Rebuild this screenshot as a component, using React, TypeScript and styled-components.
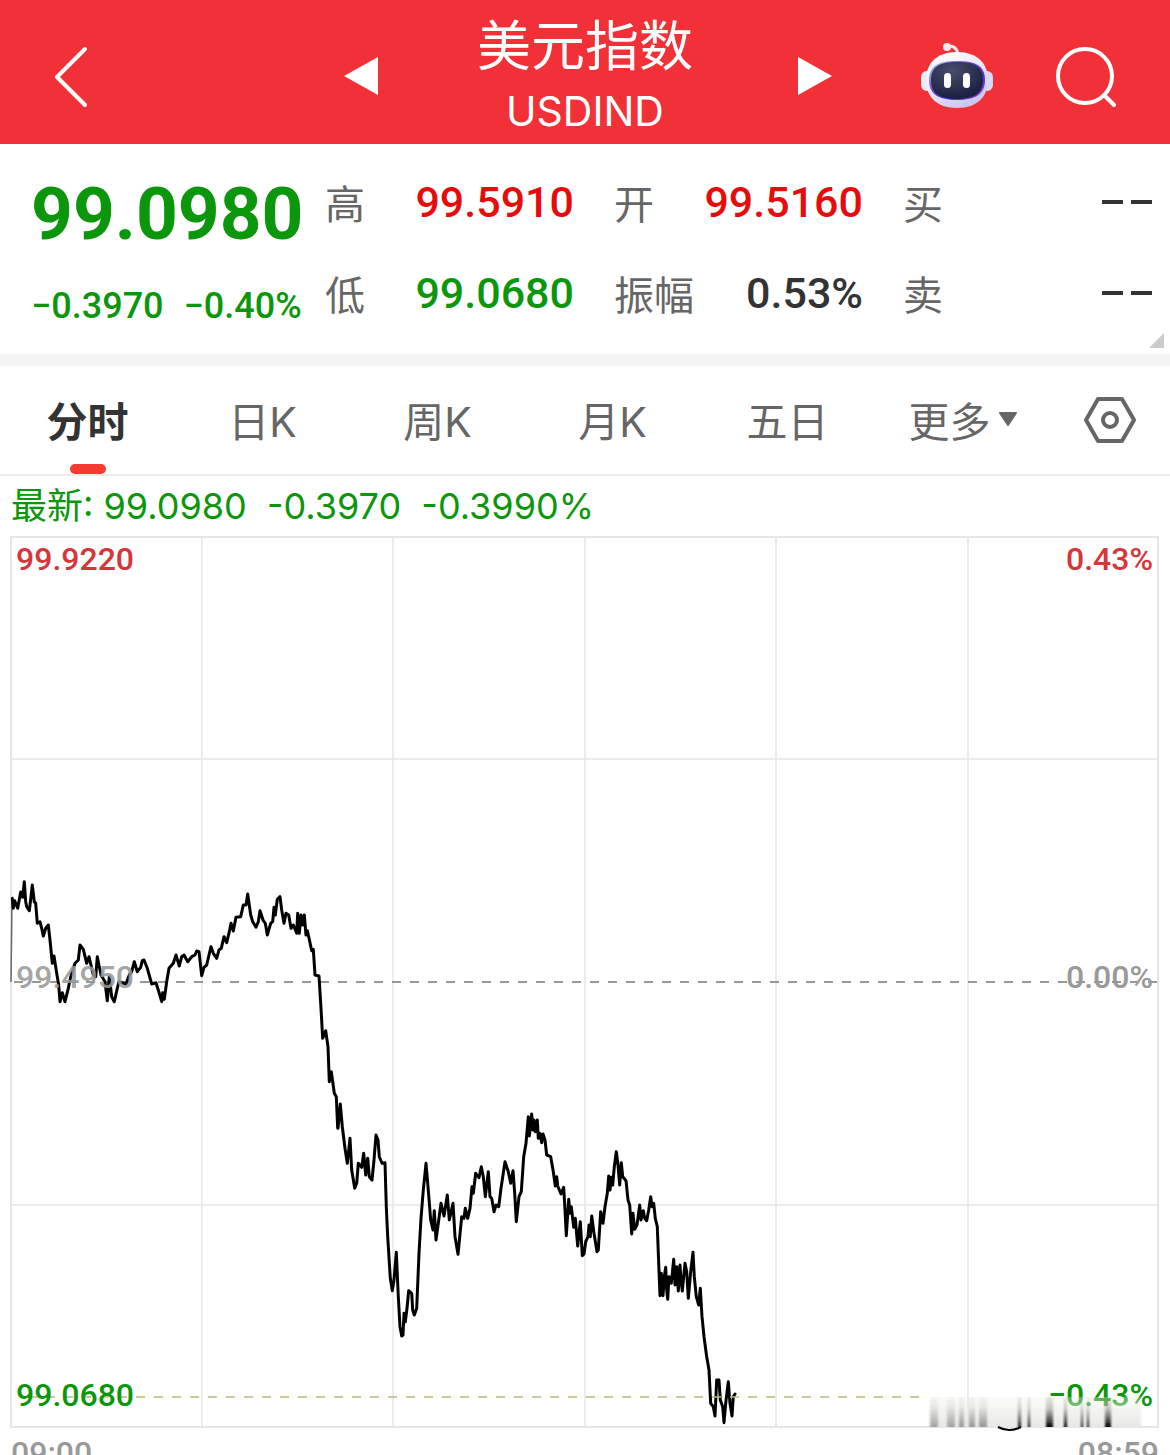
import React, { useState } from "react";
import styled, { createGlobalStyle } from "styled-components";

const RED = "#f23037";
const UP = "#e60c0c";
const DOWN = "#0b960b";
const INK = "#333333";
const GREY = "#666666";

const GlobalStyle = createGlobalStyle`
  *, *::before, *::after { box-sizing: border-box; }
  body {
    margin: 0;
    background: #ffffff;
    font-family: Inter, "Noto Sans CJK SC", sans-serif;
  }
  button {
    margin: 0;
    padding: 0;
    border: 0;
    background: none;
    color: inherit;
    font: inherit;
    cursor: pointer;
  }
`;

const Page = styled.main`
  display: flex;
  flex-direction: column;
  height: 100vh;
  overflow: hidden;
`;

const Header = styled.header`
  display: grid;
  grid-template-columns: 1fr 494px 1fr;
  align-items: center;
  height: 144px;
  flex: none;
  padding-top: 8px;
  background: ${RED};
  color: #ffffff;
`;

const HeaderSide = styled.div<{ $end?: boolean }>`
  display: flex;
  align-items: center;
  justify-content: ${(p) => (p.$end ? "flex-end" : "flex-start")};
  gap: 60px;
  padding: 0 52px;
`;

const IconButton = styled.button`
  display: flex;
  align-items: center;
  justify-content: center;
`;

const Switcher = styled.div`
  display: flex;
  align-items: center;
  justify-content: space-between;
`;

const TitleBlock = styled.div`
  display: flex;
  flex-direction: column;
  align-items: center;
`;

const Title = styled.h1`
  margin: 0;
  font-family: "Noto Sans CJK SC", sans-serif;
  font-size: 54px;
  font-weight: 400;
  line-height: 70px;
`;

const Symbol = styled.div`
  font-size: 41px;
  line-height: 66px;
`;

const Quote = styled.section`
  position: relative;
  display: grid;
  grid-template-columns: 294px 1fr;
  flex: none;
  padding: 12px 18px 14px 31px;
  border-bottom: 12px solid #f4f4f4;
`;

const PriceBlock = styled.div`
  display: flex;
  flex-direction: column;
  font-family: Roboto, sans-serif;
  color: ${DOWN};
`;

const Price = styled.div`
  font-size: 73px;
  font-weight: 700;
  line-height: 116px;
`;

const Changes = styled.div`
  display: flex;
  gap: 20px;
  font-size: 36px;
  font-weight: 500;
  line-height: 68px;
  white-space: nowrap;
`;

const Stats = styled.dl`
  display: grid;
  grid-template-columns: repeat(3, 1fr);
  grid-template-rows: repeat(2, 91px);
  column-gap: 40px;
  margin: 0;
`;

const Stat = styled.div`
  display: flex;
  align-items: center;
  justify-content: space-between;
`;

const StatLabel = styled.dt`
  color: ${GREY};
  font-family: "Noto Sans CJK SC", sans-serif;
  font-size: 40px;
  line-height: 60px;
`;

const StatValue = styled.dd<{ $color: string }>`
  margin: 0;
  color: ${(p) => p.$color};
  font-family: Roboto, sans-serif;
  font-size: 43px;
  font-weight: 500;
  line-height: 60px;
`;

const Dashes = styled.span`
  display: flex;
  gap: 8px;
  &::before, &::after {
    content: "";
    width: 21px;
    height: 4px;
    background: ${INK};
  }
`;

const Corner = styled.span`
  position: absolute;
  right: 6px;
  bottom: 6px;
  width: 15px;
  height: 15px;
  background: #cccccc;
  clip-path: polygon(100% 0, 100% 100%, 0 100%);
`;

const Tabs = styled.nav`
  display: flex;
  flex: none;
  height: 110px;
  border-bottom: 2px solid #ebebeb;
`;

const Tab = styled.button<{ $active: boolean }>`
  position: relative;
  display: flex;
  flex: 1 1 0;
  align-items: center;
  justify-content: center;
  gap: 8px;
  padding-bottom: 3px;
  color: ${(p) => (p.$active ? INK : GREY)};
  font-family: Inter, "Noto Sans CJK SC", sans-serif;
  font-size: 41px;
  font-weight: ${(p) => (p.$active ? 700 : 400)};
  &::after {
    content: "";
    display: ${(p) => (p.$active ? "block" : "none")};
    position: absolute;
    bottom: 0;
    width: 36px;
    height: 10px;
    border-radius: 5px;
    background: #f53a31;
  }
`;

const SettingsButton = styled(IconButton)`
  width: 120px;
`;

const Latest = styled.p`
  flex: none;
  margin: 0;
  padding: 0 11px;
  color: ${DOWN};
  font-size: 36px;
  line-height: 60px;
  white-space: pre;
`;

const Chart = styled.svg`
  display: block;
  flex: none;
  width: 100%;
  height: auto;
`;

const AxisText = styled.text`
  font-family: Roboto, sans-serif;
  font-size: 32px;
  font-weight: 500;
`;

const TimeAxis = styled.div`
  display: flex;
  flex: none;
  justify-content: space-between;
  padding: 0 11px;
  color: #999999;
  font-family: Roboto, sans-serif;
  font-size: 32px;
  font-weight: 500;
  line-height: 42px;
`;

/* Each trace holds samples in thirds of a unit from its own origin. */
const TRACES: { x: number; y: number; samples: number[][] }[] = [
  {
    x: 0,
    y: 324,
    samples: [
      [37, 115], [40, 145], [44, 122], [53, 145], [62, 96], [68, 112], [73, 65], [77, 125], [80, 140], [88, 152],
      [93, 110], [97, 75], [103, 125], [107, 130], [112, 190], [120, 185], [125, 205], [130, 228], [137, 205], [145, 195],
      [150, 240], [157, 310], [162, 288], [170, 340], [176, 375], [180, 425], [187, 398], [195, 425], [205, 385], [212, 350],
      [225, 310], [235, 300], [240, 255], [250, 268], [260, 310], [267, 290], [280, 345], [287, 350], [292, 290], [303, 345],
      [315, 365], [322, 422], [328, 350], [335, 410], [343, 425], [352, 385], [357, 365], [378, 372], [388, 345], [395, 335],
      [403, 305], [412, 335], [422, 322], [427, 302], [432, 300], [442, 325], [455, 372], [468, 368], [478, 400], [485, 425],
      [488, 398], [493, 418], [500, 365], [507, 325], [520, 310], [528, 285], [538, 318], [545, 290], [552, 285], [563, 305],
      [575, 290], [585, 285], [590, 273], [597, 275], [605, 347], [612, 322], [620, 315], [627, 285], [633, 260], [640, 280],
      [650, 295], [657, 270], [664, 265], [672, 230], [680, 248], [688, 215], [693, 190], [700, 213], [708, 172], [722, 170],
      [730, 135], [738, 135], [743, 102], [752, 165], [758, 185], [768, 202], [775, 185], [780, 152], [790, 182], [796, 190],
      [802, 225], [812, 190], [818, 185], [822, 142], [826, 165], [832, 118], [840, 110], [845, 150], [852, 190], [858, 160],
      [866, 165], [873, 205], [880, 195], [890, 220], [893, 160], [898, 220], [903, 165], [908, 195], [913, 165], [918, 225],
      [922, 212], [928, 238], [935, 272], [940, 268], [945, 345], [957, 348], [962, 430], [968, 535], [977, 512], [984, 560],
      [988, 665], [994, 635], [1003, 700], [1009, 710], [1013, 805],
    ],
  },
  {
    x: 310,
    y: 544,
    samples: [
      [84, 145], [91, 72], [97, 140], [105, 205], [112, 250], [120, 175], [125, 270], [134, 325], [140, 310], [145, 250],
      [155, 262], [161, 220], [167, 285], [173, 235], [178, 290], [186, 300], [192, 240], [198, 165], [204, 180], [208, 230],
      [216, 250], [225, 248], [229, 380], [233, 470], [241, 595], [247, 632], [252, 600], [259, 517], [265, 650], [270, 740],
      [275, 768], [279, 765], [282, 700], [286, 725], [291, 685], [296, 632], [305, 640], [308, 690], [313, 705], [320, 685],
      [327, 520], [333, 415], [340, 330], [348, 250], [354, 320], [362, 420], [369, 450], [373, 392], [378, 480], [385, 430],
      [393, 370], [402, 408], [412, 345], [418, 420], [429, 370], [435, 470], [444, 523], [455, 410], [462, 415], [466, 385],
      [473, 415], [480, 385], [486, 320], [490, 340], [497, 280], [507, 293], [514, 260], [520, 290], [526, 350], [535, 275],
      [540, 350], [545, 355], [552, 395], [558, 375], [566, 380], [573, 325], [579, 285], [585, 245], [595, 275], [602, 310],
      [609, 272], [614, 340], [619, 425], [627, 350], [634, 335], [641, 230], [648, 190], [655, 110], [658, 168], [665, 102],
      [668, 150], [672, 120], [676, 155], [682, 120],
    ],
  },
  {
    x: 500,
    y: 554,
    samples: [
      [115, 145], [120, 130], [125, 158], [129, 132], [135, 150], [140, 195], [152, 200], [160, 245], [166, 288], [170, 260],
      [173, 288], [183, 312], [191, 292], [195, 360], [199, 437], [206, 328], [210, 370], [214, 350], [221, 412], [226, 385],
      [233, 468], [241, 395], [247, 497], [252, 492], [257, 455], [264, 440], [267, 405], [271, 440], [275, 378], [282, 430],
      [291, 485], [295, 480], [302, 365], [309, 400], [315, 350], [322, 310], [326, 258], [330, 300], [334, 262], [338, 285],
      [343, 230], [349, 185], [354, 225], [359, 285], [364, 218], [368, 260], [378, 272], [384, 330], [389, 345], [395, 432],
      [399, 370], [404, 418], [411, 405], [419, 345], [423, 390], [430, 362], [434, 385], [440, 392], [446, 360], [452, 320],
      [456, 350], [461, 340], [466, 385], [472, 410], [476, 520], [480, 617], [484, 550], [489, 617], [493, 560], [497, 532],
      [500, 600], [503, 628], [507, 560], [514, 580], [521, 508], [525, 585], [530, 530], [535, 603], [540, 525], [543, 570],
      [547, 603], [555, 520], [560, 545], [565, 625], [572, 545], [579, 487], [583, 560], [589, 620], [596, 645], [601, 595],
      [606, 680], [612, 740], [620, 800], [627, 840], [632, 940], [640, 950], [645, 978], [650, 870], [657, 870], [661, 930],
      [668, 950], [672, 998], [677, 940], [685, 875], [690, 940], [696, 978], [700, 920], [705, 912],
    ],
  },
];

const priceLine = TRACES.flatMap((t) =>
  t.samples.map(([u, v]) => `${(t.x + u / 3).toFixed(1)},${(t.y + v / 3).toFixed(1)}`)
).join(" ");

const GRID_X = [202, 393, 585, 776, 968];
const GRID_Y = [223, 669];

/* x, width and darkness of the smudged bars in the lower right corner */
const SMUDGES = [
  [930, 8, 0.3], [947, 8, 0.3], [959, 5, 0.35], [969, 6, 0.35], [979, 8, 0.35], [1018, 3, 0.9], [1028, 2, 1],
  [1046, 7, 1], [1064, 3, 1], [1081, 2, 0.9], [1087, 2, 0.9], [1105, 6, 1],
];

function PriceChart() {
  return (
    <Chart viewBox="0 0 1170 896" role="img" aria-label="分时走势">
      <defs>
        <linearGradient id="smudge" x1="0" y1="0" x2="0" y2="1">
          <stop offset="0" stopColor="#77775a" stopOpacity="0.15" />
          <stop offset="0.4" stopColor="#222222" stopOpacity="0.25" />
          <stop offset="1" stopColor="#000000" />
        </linearGradient>
        <linearGradient id="veil" x1="0" y1="0" x2="0" y2="1">
          <stop offset="0" stopColor="#f0f0e8" stopOpacity="0.3" />
          <stop offset="1" stopColor="#e6e6e6" stopOpacity="0.95" />
        </linearGradient>
        <filter id="soft" x="-20%" y="-5%" width="140%" height="110%">
          <feGaussianBlur stdDeviation="1 0" />
        </filter>
      </defs>
      <g stroke="#e6e6e6" strokeWidth="1.5" fill="none">
        <rect x="11" y="1" width="1147" height="890" strokeWidth="2" />
        {GRID_X.map((x) => (
          <line key={x} x1={x} x2={x} y1="1" y2="891" />
        ))}
        {GRID_Y.map((y) => (
          <line key={y} x1="11" x2="1158" y1={y} y2={y} />
        ))}
      </g>
      <line x1="14" x2="1158" y1="446" y2="446" stroke="#777777" strokeWidth="1.5" strokeDasharray="9 9" />
      <line x1="11" x2="12" y1="446" y2="362" stroke="#666666" strokeWidth="1.5" />
      <polyline points={priceLine} fill="none" stroke="#000000" strokeWidth="3" strokeLinejoin="round" strokeLinecap="round" />
      <line x1="28" x2="920" y1="861" y2="861" stroke="#bcb67c" strokeWidth="1.5" strokeDasharray="9 9" />
      <AxisText x="16" y="34" fill="#d6353a">99.9220</AxisText>
      <AxisText x="1153" y="34" textAnchor="end" fill="#d6353a">0.43%</AxisText>
      <AxisText x="16" y="452" fill="#999999" fillOpacity="0.9">99.4950</AxisText>
      <AxisText x="1153" y="452" textAnchor="end" fill="#999999">0.00%</AxisText>
      <AxisText x="16" y="870" fill={DOWN}>99.0680</AxisText>
      <AxisText x="1153" y="870" textAnchor="end" fill={DOWN}>−0.43%</AxisText>
      <rect x="930" y="861" width="211" height="30" fill="url(#veil)" filter="url(#soft)" />
      <g filter="url(#soft)">
        {SMUDGES.map(([x, w, o]) => (
          <rect key={x} x={x} y="861" width={w} height="30" fill="url(#smudge)" opacity={o} />
        ))}
      </g>
      <path d="M998 891q11 6 23 0" stroke="#000000" strokeWidth="2" fill="none" />
    </Chart>
  );
}

function Robot() {
  return (
    <svg width="74" height="68" viewBox="0 0 74 68" aria-hidden="true">
      <defs>
        <linearGradient id="shell" x1="0.2" y1="0" x2="0.8" y2="1">
          <stop offset="0" stopColor="#ffffff" />
          <stop offset="0.5" stopColor="#e8e6f5" />
          <stop offset="1" stopColor="#c3c0f0" />
        </linearGradient>
        <linearGradient id="rim" x1="0" y1="0" x2="1" y2="1">
          <stop offset="0" stopColor="#9fd8ee" />
          <stop offset="0.4" stopColor="#7a40dc" />
          <stop offset="0.7" stopColor="#4c34c8" />
          <stop offset="1" stopColor="#b93de0" />
        </linearGradient>
        <radialGradient id="visor" cx="0.4" cy="0.25" r="0.7">
          <stop offset="0" stopColor="#4a4c6a" />
          <stop offset="1" stopColor="#1b2342" />
        </radialGradient>
      </defs>
      <path d="M27 5c6-2 10 1 11 7" fill="none" stroke="#f0e8f0" strokeWidth="3" />
      <circle cx="27" cy="5" r="4" fill="#f3e9ef" />
      <rect x="1" y="29" width="12" height="20" rx="6" fill="#eeebf6" />
      <rect x="61" y="29" width="12" height="20" rx="6" fill="#dcd8f4" />
      <path d="M37 10c21 0 31 12 31 28S58 66 37 66 6 54 6 38s10-28 31-28z" fill="url(#shell)" />
      <path d="M37 19c19 0 28 5 28 19s-9 20-28 20S9 52 9 38s9-19 28-19z" fill="url(#rim)" />
      <path d="M37 20c18 0 26 5 26 18s-8 19-26 19-26-6-26-19 8-18 26-18z" fill="url(#visor)" />
      <rect x="24" y="31" width="7" height="15" rx="3.5" fill="#ffffff" />
      <rect x="43" y="31" width="7" height="15" rx="3.5" fill="#ffffff" />
    </svg>
  );
}

const STATS = [
  { label: "高", value: "99.5910", color: UP },
  { label: "开", value: "99.5160", color: UP },
  { label: "买", value: null, color: INK },
  { label: "低", value: "99.0680", color: DOWN },
  { label: "振幅", value: "0.53%", color: INK },
  { label: "卖", value: null, color: INK },
];

const TABS = ["分时", "日K", "周K", "月K", "五日", "更多"];

export default function App() {
  const [active, setActive] = useState("分时");
  return (
    <Page>
      <GlobalStyle />
      <Header>
        <HeaderSide>
          <IconButton aria-label="返回">
            <svg width="38" height="64" viewBox="0 0 38 64" fill="none" stroke="#ffffff" strokeWidth="4" strokeLinecap="round">
              <path d="M33 5 5 33l28 28" strokeLinejoin="round" />
            </svg>
          </IconButton>
        </HeaderSide>
        <Switcher>
          <IconButton aria-label="上一个">
            <svg width="40" height="40" viewBox="0 0 40 40" fill="#ffffff">
              <path d="M6 20 40 1v38z" />
            </svg>
          </IconButton>
          <TitleBlock>
            <Title>美元指数</Title>
            <Symbol>USDIND</Symbol>
          </TitleBlock>
          <IconButton aria-label="下一个">
            <svg width="40" height="40" viewBox="0 0 40 40" fill="#ffffff">
              <path d="M6 1v38l34-19z" />
            </svg>
          </IconButton>
        </Switcher>
        <HeaderSide $end>
          <IconButton aria-label="智能助手">
            <Robot />
          </IconButton>
          <IconButton aria-label="搜索">
            <svg width="64" height="64" viewBox="0 0 64 64" fill="none" stroke="#ffffff" strokeWidth="4">
              <circle cx="31" cy="32" r="27" />
              <path d="m50 51 10 10" strokeLinecap="round" />
            </svg>
          </IconButton>
        </HeaderSide>
      </Header>

      <Quote>
        <PriceBlock>
          <Price>99.0980</Price>
          <Changes>
            <span>−0.3970</span>
            <span>−0.40%</span>
          </Changes>
        </PriceBlock>
        <Stats>
          {STATS.map((s) => (
            <Stat key={s.label}>
              <StatLabel>{s.label}</StatLabel>
              <StatValue $color={s.color}>{s.value ?? <Dashes />}</StatValue>
            </Stat>
          ))}
        </Stats>
        <Corner />
      </Quote>

      <Tabs>
        {TABS.map((t) => (
          <Tab key={t} $active={t === active} onClick={() => setActive(t)}>
            {t}
            {t === "更多" && (
              <svg width="18" height="14" viewBox="0 0 18 14" fill={GREY} stroke={GREY} strokeWidth="2" strokeLinejoin="round">
                <path d="M1 1h16L9 13z" />
              </svg>
            )}
          </Tab>
        ))}
        <SettingsButton aria-label="设置">
          <svg width="52" height="48" viewBox="0 0 52 48" fill="none" stroke={GREY} strokeWidth="4" strokeLinejoin="round">
            <path d="M14 3h24l12 21-12 21H14L2 24z" />
            <circle cx="26" cy="24" r="7" />
          </svg>
        </SettingsButton>
      </Tabs>

      <Latest>最新: 99.0980  -0.3970  -0.3990%</Latest>
      <PriceChart />
      <TimeAxis>
        <span>09:00</span>
        <span>08:59</span>
      </TimeAxis>
    </Page>
  );
}
